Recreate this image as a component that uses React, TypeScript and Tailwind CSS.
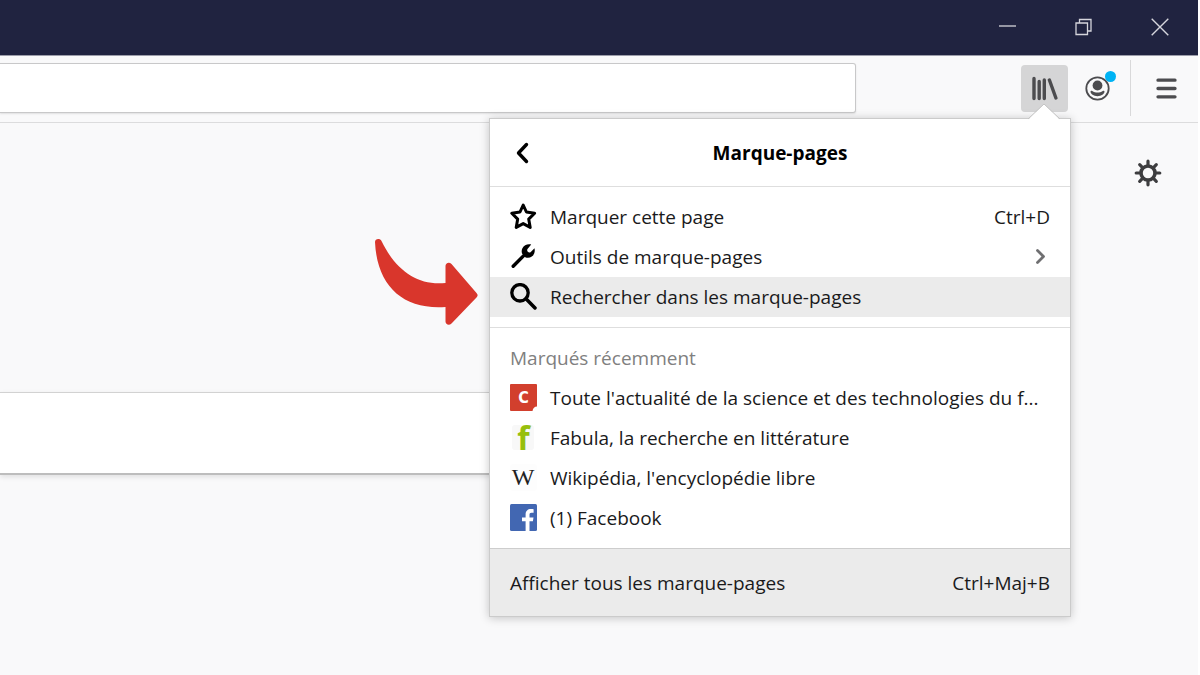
import type { ReactNode } from "react";

function StarIcon() {
  return (
    <svg width="27" height="27" viewBox="0 0 27 27" fill="none" aria-hidden="true">
      <path
        d="M13.2 2 16.4 9 24.6 10.2 18.7 16.1 20.2 24.4 13.2 20.6 6.2 24.4 7.700 16.1 1.8 10.2 10 9Z"
        stroke="#000"
        strokeWidth="3"
        strokeLinejoin="round"
      />
    </svg>
  );
}

function WrenchIcon() {
  return (
    <svg width="27" height="27" viewBox="0 0 27 27" fill="none" aria-hidden="true">
      <path d="M3.2 23.2 15 11.4" stroke="#000" strokeWidth="3.4" strokeLinecap="round" />
      <path
        d="M21.2 1.6C18 .6 14 2 12.4 5.2c-.9 1.9-.9 3.6-.4 5.2l3.6 4c2 .7 4.4.5 6.2-.8 2.400-1.7 3.5-4.7 2.7-8.3l-4 3.9c-.9.5-2 .3-2.7-.4-.7-.8-.8-1.800-.3-2.7Z"
        fill="#000"
      />
    </svg>
  );
}

function SearchIcon() {
  return (
    <svg width="27" height="27" viewBox="0 0 27 27" fill="none" stroke="#000" aria-hidden="true">
      <circle cx="10" cy="9.8" r="8.2" strokeWidth="3.3" />
      <path d="m16 15.8 9 9.2" strokeWidth="3.5" strokeLinecap="round" />
    </svg>
  );
}

function LibraryIcon() {
  return (
    <svg width="27" height="27" viewBox="0 0 27 27" fill="none" stroke="#4c4c4f" strokeWidth="3.4" strokeLinecap="round" aria-hidden="true">
      <path d="M3 3.5v20M8.2 6.5v17M13.3 5v18.500M18.400 5l6.5 18" />
    </svg>
  );
}

function AccountIcon() {
  return (
    <svg width="27" height="27" viewBox="0 0 27 27" fill="none" aria-hidden="true">
      <circle cx="13.5" cy="13.5" r="11.2" stroke="#4c4c4f" strokeWidth="1.8" />
      <circle cx="13.5" cy="10.500" r="4.9" fill="#4c4c4f" />
      <path d="M6.5 16.6c0-.9.9-1.2 1.7-.7 3.3 2 7.3 2 10.6 0 .8-.5 1.7-.2 1.7.7 0 2.4-3.1 4.6-7 4.6s-7-2.200-7-4.6Z" fill="#4c4c4f" />
    </svg>
  );
}

function GearIcon() {
  return (
    <svg width="28" height="28" viewBox="0 0 28 28" fill="none" stroke="#3d3d3f" aria-hidden="true">
      <circle cx="14" cy="14" r="7" strokeWidth="3.6" />
      <path
        d="M14 2.2v4M14 21.8v4M2.2 14h4M21.8 14h4M5.7 5.7l2.6 2.6M19.7 19.7l2.6 2.6M22.3 5.7l-2.6 2.6M8.3 19.7l-2.6 2.6"
        strokeWidth="3.2"
        strokeLinecap="round"
      />
    </svg>
  );
}

function ScienceFavicon() {
  return (
    <svg width="27" height="27" viewBox="0 0 27 27" aria-hidden="true">
      <path d="M1 0h25a1 1 0 0 1 1 1v21.5c-2.5 0-4 1.5-4.5 4.5H1a1 1 0 0 1-1-1V1a1 1 0 0 1 1-1Z" fill="#d23f2d" />
      <text x="13.5" y="19" textAnchor="middle" fontSize="16" fontWeight="700" fill="#fff" className="font-['Liberation_Sans_Narrow','DejaVu_Sans_Condensed','Liberation_Sans',sans-serif]">
        C
      </text>
    </svg>
  );
}

function FabulaFavicon() {
  return (
    <svg width="27" height="27" viewBox="0 0 27 27" overflow="visible" aria-hidden="true">
      <rect x="2" y="1" width="22" height="25" rx="3" fill="#f8f8f8" />
      <text x="13.5" y="26" textAnchor="middle" fontSize="32" fontWeight="700" fill="#97bf0d" className="font-['Open_Sans',sans-serif]">
        f
      </text>
    </svg>
  );
}

function WikipediaFavicon() {
  return (
    <svg width="27" height="27" viewBox="0 0 27 27" aria-hidden="true">
      <rect width="27" height="27" rx="3" fill="#fdfdfd" />
      <text x="13" y="21" textAnchor="middle" fontSize="24" fill="#222" className="font-['Liberation_Serif',serif]">
        W
      </text>
    </svg>
  );
}

function FacebookFavicon() {
  return (
    <svg width="27" height="27" viewBox="0 0 27 27" aria-hidden="true">
      <rect width="27" height="27" rx="1.5" fill="#4267b2" />
      <path
        d="M15.600 27V17.200H12V13.400h3.600v-3c0-3.500 2.200-5.400 5.300-5.400 1.100 0 2.100.1 2.700.2v3.500h-2.100c-1.600 0-2 .8-2 2v2.700h4l-.6 3.800h-3.400V27Z"
        fill="#fff"
      />
    </svg>
  );
}

const ACTIONS = [
  { label: "Marquer cette page", icon: <StarIcon />, shortcut: "Ctrl+D" },
  { label: "Outils de marque-pages", icon: <WrenchIcon />, submenu: true },
  { label: "Rechercher dans les marque-pages", icon: <SearchIcon />, active: true },
];

const RECENT = [
  { label: "Toute l'actualité de la science et des technologies du f...", icon: <ScienceFavicon /> },
  { label: "Fabula, la recherche en littérature", icon: <FabulaFavicon /> },
  { label: "Wikipédia, l'encyclopédie libre", icon: <WikipediaFavicon /> },
  { label: "(1) Facebook", icon: <FacebookFavicon /> },
];

type MenuRowProps = {
  label: string;
  icon: ReactNode;
  shortcut?: string;
  submenu?: boolean;
  active?: boolean;
};

function MenuRow({ label, icon, shortcut, submenu, active }: MenuRowProps) {
  return (
    <li>
      <button
        type="button"
        className={`flex h-10 w-full items-center gap-[13px] px-5 text-left whitespace-nowrap ${active ? "bg-[#ebebeb]" : "hover:bg-[#ebebeb]"}`}
      >
        <span className="shrink-0">{icon}</span>
        <span className="flex-1">{label}</span>
        {shortcut && <span>{shortcut}</span>}
        {submenu && (
          <svg width="20" height="20" viewBox="0 0 20 20" fill="none" aria-hidden="true">
            <path d="m7.500 3.500 6 6-6 6" stroke="#6f6f71" strokeWidth="2.800" strokeLinecap="round" strokeLinejoin="round" />
          </svg>
        )}
      </button>
    </li>
  );
}

function BookmarksPanel() {
  return (
    <div className="absolute top-[53px] -right-[3px] z-10 w-[582px] border border-[#cbcbcb] bg-white shadow-[0_1px_9px_rgba(0,0,0,0.22)]">
      {/* Pointer towards the library button */}
      <svg className="absolute -top-4 right-[10px] h-[17px] w-8" viewBox="0 0 32 17" aria-hidden="true">
        <path d="M0 17 16 1l16 16Z" fill="#fff" />
        <path d="M0 16 16 1l16 15" fill="none" stroke="#c4c4c4" />
      </svg>

      {/* Callout arrow */}
      <svg className="absolute top-[119px] right-full mr-[11px] h-[90px] w-[106px]" viewBox="0 0 106 90" aria-hidden="true">
        <path
          d="M2 4C2 .5 7 0 8.500 3c14 29 36 45 64 42V28c0-3 3.500-4.500 6-2l25 29c1.500 1.800 1.500 3 0 4.500l-25 26c-2.500 2.500-6 1-6-2V69C30 72 4 48 2 4Z"
          fill="#d9362c"
        />
      </svg>

      <header className="relative flex h-[67px] items-center justify-center pt-[2px]">
        <button type="button" aria-label="Retour" className="absolute left-5 flex size-[27px] items-center justify-center">
          <svg width="27" height="27" viewBox="0 0 27 27" fill="none" aria-hidden="true">
            <path d="m16.500 4.500-8 8.500 8 8.500" stroke="#000" strokeWidth="3.400" strokeLinecap="round" strokeLinejoin="round" />
          </svg>
        </button>
        <h1 className="font-bold text-black">Marque-pages</h1>
      </header>

      <ul className="border-t border-[#dedede] py-[10px]">
        {ACTIONS.map((item) => (
          <MenuRow key={item.label} {...item} />
        ))}
      </ul>

      <section className="border-t border-[#dedede] py-[10px]">
        <h2 className="flex h-10 items-center px-5 text-[#808080]">Marqués récemment</h2>
        <ul>
          {RECENT.map((item) => (
            <MenuRow key={item.label} {...item} />
          ))}
        </ul>
      </section>

      <button type="button" className="flex h-[68px] w-full items-center justify-between border-t border-[#cdcdcd] bg-[#ebebeb] px-5 pt-[2px]">
        <span>Afficher tous les marque-pages</span>
        <span>Ctrl+Maj+B</span>
      </button>
    </div>
  );
}

function TitleBar() {
  return (
    <div className="flex h-14 justify-end border-b border-[#9c9daa] bg-[#202340] pb-[2px]">
      <button type="button" aria-label="Réduire" className="flex w-[76px] items-center justify-center">
        <svg width="18" height="18" viewBox="0 0 18 18" stroke="#d5d5dc" strokeWidth="1.3" aria-hidden="true">
          <path d="M0 8h17" />
        </svg>
      </button>
      <button type="button" aria-label="Restaurer" className="flex w-[76px] items-center justify-center">
        <svg width="18" height="18" viewBox="0 0 18 18" fill="none" stroke="#d5d5dc" strokeWidth="1.3" aria-hidden="true">
          <path d="M1 5h11.500v11.500H1ZM4.500 5V1.500H16V13h-3.500" />
        </svg>
      </button>
      <button type="button" aria-label="Fermer" className="flex w-[76px] items-center justify-center">
        <svg width="18" height="18" viewBox="0 0 18 18" stroke="#d5d5dc" strokeWidth="1.4" aria-hidden="true">
          <path d="m.7.7 16.600 16.600M17.300.7.7 17.300" />
        </svg>
      </button>
    </div>
  );
}

function Toolbar() {
  return (
    <div className="flex h-[67px] items-center border-b border-[#dcdcdd] bg-[#f9f9fa] pr-2 pb-[2px]">
      <input
        type="text"
        aria-label="Adresse"
        className="h-[50px] min-w-0 flex-1 rounded-r-[3px] border border-l-0 border-[#c8c8c9] bg-white px-4 shadow-[0_1px_2px_rgba(0,0,0,0.1)] outline-none"
      />
      <div className="relative ml-[165px]">
        <button type="button" aria-label="Bibliothèque" className="flex size-[47px] items-center justify-center rounded-sm bg-[#d5d5d6]">
          <LibraryIcon />
        </button>
        <BookmarksPanel />
      </div>
      <button type="button" aria-label="Compte" className="relative ml-[6px] flex size-[47px] items-center justify-center">
        <AccountIcon />
        <span className="absolute top-[6px] right-[5px] size-[11px] rounded-full bg-[#00b3f4]" />
      </button>
      <span className="ml-[9px] h-14 w-px bg-[#d9d9da]" />
      <button type="button" aria-label="Menu" className="ml-3 flex size-[47px] items-center justify-center">
        <svg width="21" height="21" viewBox="0 0 21 21" stroke="#4c4c4f" strokeWidth="3.3" strokeLinecap="round" aria-hidden="true">
          <path d="M2 2.2h17M2 10.5h17M2 18.8h17" />
        </svg>
      </button>
    </div>
  );
}

export default function App() {
  return (
    <div className="min-h-screen bg-white pr-[2px] font-['Open_Sans','Noto_Sans',sans-serif] text-[19px] leading-7 text-[#1a1a1b]">
      <div className="flex min-h-screen flex-col bg-[#f9f9fa]">
        <TitleBar />
        <Toolbar />
        <main>
          <div className="flex justify-end pt-9 pr-9">
            <button type="button" aria-label="Personnaliser la page">
              <GearIcon />
            </button>
          </div>
          <input
            type="search"
            aria-label="Rechercher sur le Web"
            className="mt-[205px] block h-[83px] w-3/4 border-t border-b-2 border-t-[#d2d2d2] border-b-[#bdbdbd] bg-white px-6 shadow-[0_2px_5px_rgba(0,0,0,0.1)] outline-none"
          />
        </main>
      </div>
    </div>
  );
}
